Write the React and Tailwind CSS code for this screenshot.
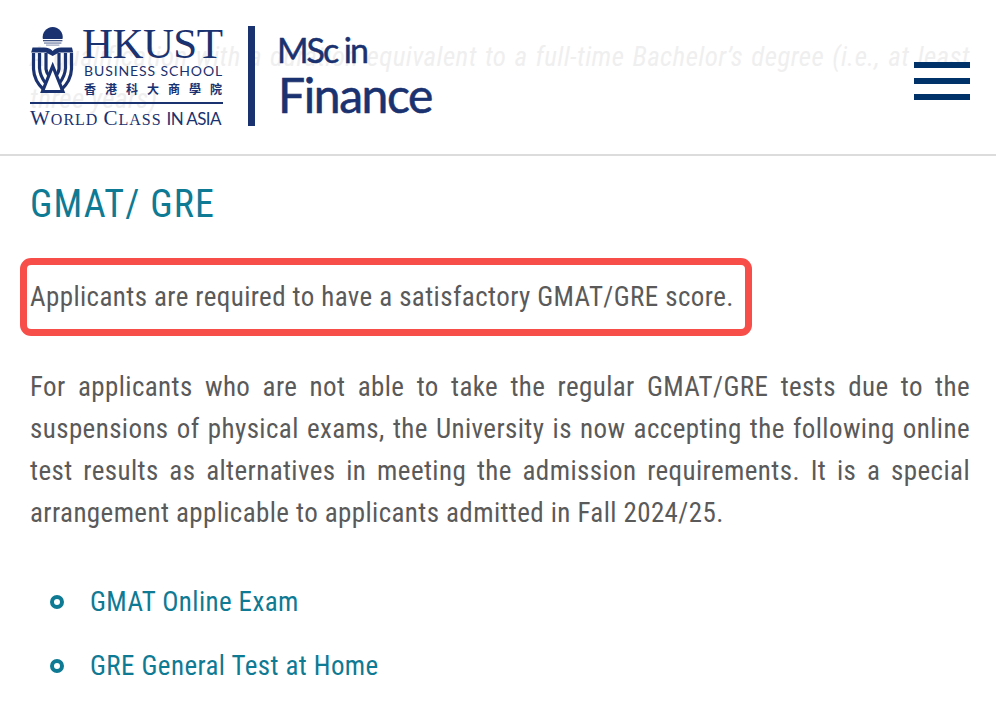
const navy = '#1b3270';

function Emblem() {
  return (
    <svg width="44" height="70" viewBox="0 0 44 70" className="shrink-0">
      <path d="M12.9 12 A10 10 0 1 1 32.5 12 Z" fill={navy} />
      <rect x="13" y="13" width="19.4" height="1.3" fill={navy} opacity="0.85" />
      <rect x="14" y="15.5" width="17.4" height="1.1" fill={navy} opacity="0.7" />
      <rect x="16" y="17.6" width="13.4" height="1" fill={navy} opacity="0.55" />
      <path d="M2.5 20.5 H14 Q20 20.5 22.7 24 Q25.4 20.5 31 20.5 H42 L43.2 25.5 H29 L22.7 29 L16 25.5 H1.2 Z" fill={navy} />
      <g fill="none" stroke={navy} strokeWidth="3.2">
        <path d="M3.5 26 V42 Q4 54 14 63" />
        <path d="M9.5 26 V41 Q10 49 15.5 56" />
        <path d="M16 26 V42 Q16.5 46 19 49" />
        <path d="M41.5 26 V42 Q41 54 31 63" />
        <path d="M35.5 26 V41 Q35 49 29.5 56" />
        <path d="M29 26 V42 Q28.5 46 26 49" />
        <path d="M22.7 39 L12.5 64.5 H32.9 Z" strokeLinejoin="miter" />
      </g>
    </svg>
  );
}

function Logo() {
  return (
    <div className="flex items-start">
      <div className="w-[194px] shrink-0 flex flex-col text-[#1b3270]">
        <div className="flex h-[75px]">
          <div className="w-[52px] shrink-0 pt-[1px]"><Emblem /></div>
          <div className="flex flex-col items-start shrink-0">
            <div className="text-[43px] leading-[30px] h-[34px] mt-[3px] tracking-[-0.6px] whitespace-nowrap" style={{ fontFamily: '"Liberation Serif", serif' }}>HKUST</div>
            <div className="text-[14px] leading-[16px] tracking-[0.9px] ml-[2px] whitespace-nowrap" style={{ fontFamily: 'Lato, sans-serif' }}>BUSINESS SCHOOL</div>
            <div className="text-[12px] leading-[18px] mt-[1px] ml-[2px] tracking-[9px] whitespace-nowrap font-bold" style={{ fontFamily: '"Noto Sans CJK TC", sans-serif' }}>香港科大商學院</div>
          </div>
        </div>
        <div className="h-[1.5px] bg-[#1b3270] w-[193px] mt-[1px]" />
        <div className="whitespace-nowrap leading-[22px] mt-[3px] text-[16px] tracking-[1px]" style={{ fontFamily: '"Liberation Serif", serif' }}>
          <span className="text-[21px]">W</span><span>ORLD</span> <span className="text-[21px]">C</span><span>LASS</span>{' '}
          <span className="text-[17px] tracking-[-0.6px]" style={{ fontFamily: 'Lato, sans-serif' }}>IN ASIA</span>
        </div>
      </div>
      <div className="ml-[24px] w-[7px] h-[100px] bg-[#1b3270]" />
      <div className="ml-[22px] text-[#1b3270] pt-[5px]" style={{ fontFamily: 'Lato, sans-serif' }}>
        <div className="text-[34px] leading-[38px] tracking-[-2px] [-webkit-text-stroke:0.5px_#1b3270]">MSc in</div>
        <div className="text-[48px] leading-[52px] tracking-[-1.4px] ml-[1px] [-webkit-text-stroke:0.6px_#1b3270]">Finance</div>
      </div>
    </div>
  );
}

export default function App() {
  return (
    <div className="w-[996px] h-[708px] overflow-hidden bg-white font-stretch-[75%]" style={{ fontFamily: '"Roboto", "Liberation Sans", sans-serif' }}>
      <header className="relative h-[156px] border-b-2 border-[#dcdcdc] pl-[30px] pr-[26px] pt-[26px] flex justify-between">
        <p className="absolute left-[30px] top-[36px] w-[940px] text-[27px] leading-[42px] tracking-[0.4px] italic text-[#efefef] text-justify">
          A qualification with a duration equivalent to a full-time Bachelor’s degree (i.e., at least three years)
        </p>
        <div className="relative"><Logo /></div>
        <div className="relative mt-[36px] w-[56px] flex flex-col gap-[10px]">
          <div className="h-[6px] bg-[#00326a]" />
          <div className="h-[6px] bg-[#00326a]" />
          <div className="h-[6px] bg-[#00326a]" />
        </div>
      </header>
      <main className="pl-[30px] pr-[26px] text-[27px] leading-[42px] text-[#5a5a5a] tracking-[0.4px]">
        <h2 className="mt-[26px] text-[38px] leading-[44px] text-[#0f7a93] tracking-[1.1px]">GMAT/ GRE</h2>
        <p className="relative mt-[50px]">
          Applicants are required to have a satisfactory GMAT/GRE score.
          <span className="absolute left-[-10px] top-[-18px] w-[732px] h-[78px] border-[7px] border-[#f84e4a] rounded-[11px]" />
        </p>
        <p className="mt-[48px] text-justify">
          For applicants who are not able to take the regular GMAT/GRE tests due to the suspensions of physical exams, the University is now accepting the following online test results as alternatives in meeting the admission requirements. It is a special arrangement applicable to applicants admitted in Fall 2024/25.
        </p>
        <ul className="mt-[47px] flex flex-col gap-[22px] text-[#0f7a93]">
          <li className="flex items-center">
            <span className="ml-[20px] w-[14px] h-[14px] rounded-full border-[4px] border-[#0f7a93]" />
            <span className="ml-[26px]">GMAT Online Exam</span>
          </li>
          <li className="flex items-center">
            <span className="ml-[20px] w-[14px] h-[14px] rounded-full border-[4px] border-[#0f7a93]" />
            <span className="ml-[26px]">GRE General Test at Home</span>
          </li>
        </ul>
      </main>
    </div>
  );
}
